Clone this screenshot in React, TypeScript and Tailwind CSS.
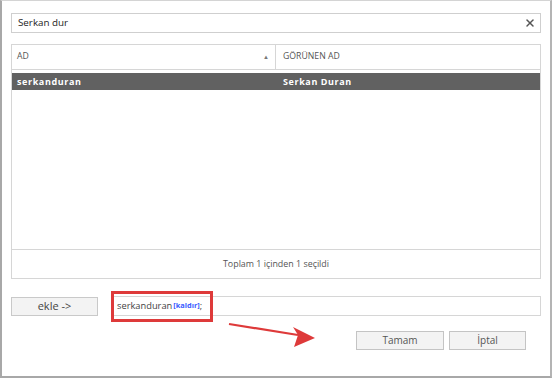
import { X } from 'lucide-react';

export default function App() {
  return (
    <div
      className="relative w-[552px] h-[378px] overflow-hidden bg-white border-t border-t-[#d4d4d4] border-l-2 border-l-[#a8a8a8] border-r-2 border-r-[#b4b4b4] border-b-2 border-b-[#a8a8a8] [font-stretch:93%]"
      style={{ fontFamily: '"Open Sans", "Noto Sans", sans-serif' }}
    >
      <div className="flex flex-col pt-[12px] pl-[9px] pr-[9px]">
        {/* search */}
        <div className="flex items-center h-[20px] border border-[#cfcfcf] pl-[6px] pr-[4px]">
          <span className="flex-1 text-[9.8px] text-[#222]">Serkan dur</span>
          <X className="w-[12px] h-[12px] text-[#555]" strokeWidth={3} />
        </div>

        {/* table */}
        <div className="mt-[11px] h-[235px] border border-[#d6d6d6] flex flex-col">
          <div className="flex h-[25px] border-b border-[#d6d6d6] text-[8.7px] text-[#555]">
            <div className="w-[264px] flex items-center justify-between pl-[5px] pr-[6px] border-r border-[#d6d6d6]">
              <span>AD</span>
              <span className="text-[6px] text-[#777]">▲</span>
            </div>
            <div className="flex items-center pl-[7px]">GÖRÜNEN AD</div>
          </div>
          <div className="mt-[3px] flex h-[17px] bg-[#616161] text-white text-[9px] font-bold tracking-[0.6px]">
            <div className="w-[264px] flex items-center pl-[5px]">serkanduran</div>
            <div className="flex items-center pl-[7px]">Serkan Duran</div>
          </div>
          <div className="flex-1" />
          <div className="h-[29px] border-t border-[#d6d6d6] flex items-center justify-center text-[8.9px] text-[#555]">
            Toplam 1 içinden 1 seçildi
          </div>
        </div>

        {/* add row */}
        <div className="mt-[17px] flex items-center">
          <button className="w-[87px] h-[19px] bg-[#f3f3f3] border border-[#c9c9c9] text-[11px] text-[#444]">
            ekle -&gt;
          </button>
          <div className="relative ml-[14px] flex-1 h-[20px] border border-[#d6d6d6] flex items-center pl-[4px]">
            <span className="text-[9.3px] text-[#444]">serkanduran</span>
            <span className="ml-[1px] text-[7.4px] font-bold text-[#3b5bff]">[kaldır]</span>
            <span className="text-[9.3px] text-[#444]">;</span>
            <div className="absolute left-[-2px] top-[-6px] w-[102px] h-[31px] border-[3px] border-[#de3a3a]" />
          </div>
        </div>

        {/* buttons */}
        <div className="mt-[15px] flex justify-end gap-[5px] pr-[15px]">
          <button className="w-[88px] h-[19px] bg-[#f3f3f3] border border-[#c4c4c4] text-[10px] text-[#555]">
            Tamam
          </button>
          <button className="w-[77px] h-[19px] bg-[#f3f3f3] border border-[#c4c4c4] text-[10px] text-[#555]">
            İptal
          </button>
        </div>
      </div>

      {/* red arrow */}
      <svg className="absolute left-0 top-0" width="552" height="378" viewBox="0 0 552 378">
        <line x1="227" y1="323" x2="296" y2="334" stroke="#de3a3a" strokeWidth="2.2" />
        <polygon points="313,337 291,326 296,334 292,346" fill="#de3a3a" />
      </svg>
    </div>
  );
}
